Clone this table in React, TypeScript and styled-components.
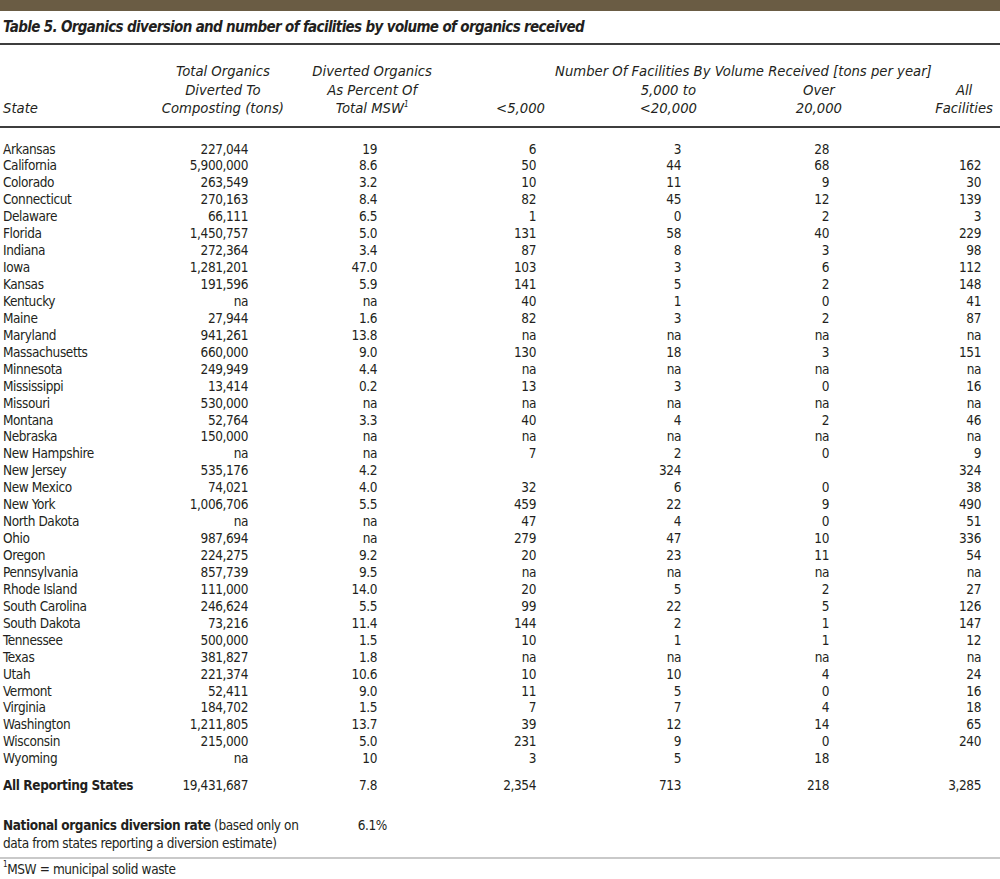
import styled, { createGlobalStyle } from "styled-components";

const GlobalStyle = createGlobalStyle`
    body {
        margin: 0;
        background: #ffffff;
        color: #231f20;
        font-family: "Liberation Sans Narrow", "Arial Narrow", "DejaVu Sans Condensed", "Liberation Sans", sans-serif;
        font-size: 13.5px;
        letter-spacing: -0.4px;
    }
`;

const COLS = "140px 150px 150px 110px 150px 145px 155px";
// right padding of the numbers in each value column
const NUM_PAD = [42, 63, 14, 19, 16, 19];

const Page = styled.div`
    width: 1000px;
`;

const TopBar = styled.div`
    height: 11px;
    background-color: #6a5c44;
`;

const Title = styled.h1`
    margin: 0;
    height: 32px;
    line-height: 32px;
    padding-left: 3px;
    font-size: 15px;
    letter-spacing: -0.65px;
    font-weight: bold;
    font-style: italic;
    white-space: nowrap;
`;

const Rule = styled.div<{ $light?: boolean }>`
    height: 2px;
    background-color: ${(p) => (p.$light ? "#c9c9c9" : "#3d3d3d")};
`;

const HeaderGrid = styled.div`
    display: grid;
    grid-template-columns: ${COLS};
    grid-template-rows: 18.5px 37px;
    align-items: end;
    padding: 17px 0 8px;
    font-size: 14.7px;
    letter-spacing: 0;
    font-style: italic;
    line-height: 18.5px;
`;

const HeadCell = styled.div<{ $col: string; $row: string; $pad?: number; $left?: number }>`
    grid-column: ${(p) => p.$col};
    grid-row: ${(p) => p.$row};
    text-align: ${(p) => (p.$left !== undefined ? "left" : "right")};
    padding-right: ${(p) => p.$pad ?? 0}px;
    padding-left: ${(p) => p.$left ?? 0}px;
    white-space: nowrap;
`;

const HeadText = styled.span`
    display: inline-block;
    text-align: center;
`;

const Sup = styled.sup`
    font-size: 8px;
    vertical-align: top;
    line-height: 1;
    position: relative;
    top: 2px;
`;

const Body = styled.div`
    padding-top: 13px;
`;

const Row = styled.div`
    display: grid;
    grid-template-columns: ${COLS};
    height: 16.95px;
    line-height: 16.95px;
`;

const TotalRow = styled(Row)`
    margin-top: 10px;
`;

const StateCell = styled.div<{ $bold?: boolean }>`
    padding-left: 3px;
    white-space: nowrap;
    font-weight: ${(p) => (p.$bold ? "bold" : "normal")};
`;

const Num = styled.div<{ $pad: number }>`
    text-align: right;
    padding-right: ${(p) => p.$pad}px;
    white-space: nowrap;
`;

const NationalGrid = styled.div`
    display: grid;
    grid-template-columns: ${COLS};
    margin-top: 22px;
    margin-bottom: 5px;
    line-height: 18px;
`;

const NationalLabel = styled.div`
    grid-column: 1 / 3;
    padding-left: 3px;
    white-space: nowrap;
`;

const Footnote = styled.div`
    padding-left: 3px;
    line-height: 20px;
`;

type Entry = [string, string, string, string, string, string, string];

const rows: Entry[] = [
    ["Arkansas", "227,044", "19", "6", "3", "28", ""],
    ["California", "5,900,000", "8.6", "50", "44", "68", "162"],
    ["Colorado", "263,549", "3.2", "10", "11", "9", "30"],
    ["Connecticut", "270,163", "8.4", "82", "45", "12", "139"],
    ["Delaware", "66,111", "6.5", "1", "0", "2", "3"],
    ["Florida", "1,450,757", "5.0", "131", "58", "40", "229"],
    ["Indiana", "272,364", "3.4", "87", "8", "3", "98"],
    ["Iowa", "1,281,201", "47.0", "103", "3", "6", "112"],
    ["Kansas", "191,596", "5.9", "141", "5", "2", "148"],
    ["Kentucky", "na", "na", "40", "1", "0", "41"],
    ["Maine", "27,944", "1.6", "82", "3", "2", "87"],
    ["Maryland", "941,261", "13.8", "na", "na", "na", "na"],
    ["Massachusetts", "660,000", "9.0", "130", "18", "3", "151"],
    ["Minnesota", "249,949", "4.4", "na", "na", "na", "na"],
    ["Mississippi", "13,414", "0.2", "13", "3", "0", "16"],
    ["Missouri", "530,000", "na", "na", "na", "na", "na"],
    ["Montana", "52,764", "3.3", "40", "4", "2", "46"],
    ["Nebraska", "150,000", "na", "na", "na", "na", "na"],
    ["New Hampshire", "na", "na", "7", "2", "0", "9"],
    ["New Jersey", "535,176", "4.2", "", "324", "", "324"],
    ["New Mexico", "74,021", "4.0", "32", "6", "0", "38"],
    ["New York", "1,006,706", "5.5", "459", "22", "9", "490"],
    ["North Dakota", "na", "na", "47", "4", "0", "51"],
    ["Ohio", "987,694", "na", "279", "47", "10", "336"],
    ["Oregon", "224,275", "9.2", "20", "23", "11", "54"],
    ["Pennsylvania", "857,739", "9.5", "na", "na", "na", "na"],
    ["Rhode Island", "111,000", "14.0", "20", "5", "2", "27"],
    ["South Carolina", "246,624", "5.5", "99", "22", "5", "126"],
    ["South Dakota", "73,216", "11.4", "144", "2", "1", "147"],
    ["Tennessee", "500,000", "1.5", "10", "1", "1", "12"],
    ["Texas", "381,827", "1.8", "na", "na", "na", "na"],
    ["Utah", "221,374", "10.6", "10", "10", "4", "24"],
    ["Vermont", "52,411", "9.0", "11", "5", "0", "16"],
    ["Virginia", "184,702", "1.5", "7", "7", "4", "18"],
    ["Washington", "1,211,805", "13.7", "39", "12", "14", "65"],
    ["Wisconsin", "215,000", "5.0", "231", "9", "0", "240"],
    ["Wyoming", "na", "10", "3", "5", "18", ""],
];

const total: Entry = ["All Reporting States", "19,431,687", "7.8", "2,354", "713", "218", "3,285"];

const renderCells = (entry: Entry, bold?: boolean) => (
    <>
        <StateCell $bold={bold}>{entry[0]}</StateCell>
        {entry.slice(1).map((v, i) => (
            <Num key={i} $pad={NUM_PAD[i]}>{v}</Num>
        ))}
    </>
);

export default function App() {
    return (
        <Page>
            <GlobalStyle />
            <TopBar />
            <Title>Table 5. Organics diversion and number of facilities by volume of organics received</Title>
            <Rule />
            <HeaderGrid>
                <HeadCell $col="1" $row="1 / 3" $left={3}>State</HeadCell>
                <HeadCell $col="2" $row="1 / 3" $pad={6}>
                    <HeadText>Total Organics<br />Diverted To<br />Composting (tons)</HeadText>
                </HeadCell>
                <HeadCell $col="3" $row="1 / 3" $pad={8}>
                    <HeadText>Diverted Organics<br />As Percent Of<br />Total MSW<Sup>1</Sup></HeadText>
                </HeadCell>
                <HeadCell $col="4 / 8" $row="1" $left={115}>
                    Number Of Facilities By Volume Received [tons per year]
                </HeadCell>
                <HeadCell $col="4" $row="2" $pad={5}><HeadText>&lt;5,000</HeadText></HeadCell>
                <HeadCell $col="5" $row="2" $pad={3}><HeadText>5,000 to<br />&lt;20,000</HeadText></HeadCell>
                <HeadCell $col="6" $row="2" $pad={3}><HeadText>Over<br />20,000</HeadText></HeadCell>
                <HeadCell $col="7" $row="2" $pad={7}><HeadText>All<br />Facilities</HeadText></HeadCell>
            </HeaderGrid>
            <Rule />
            <Body>
                {rows.map((r) => (
                    <Row key={r[0]}>{renderCells(r)}</Row>
                ))}
                <TotalRow>{renderCells(total, true)}</TotalRow>
            </Body>
            <NationalGrid>
                <NationalLabel>
                    <b>National organics diversion rate</b> (based only on<br />
                    data from states reporting a diversion estimate)
                </NationalLabel>
                <Num $pad={53}>6.1%</Num>
            </NationalGrid>
            <Rule $light />
            <Footnote><Sup>1</Sup>MSW = municipal solid waste</Footnote>
        </Page>
    );
}
